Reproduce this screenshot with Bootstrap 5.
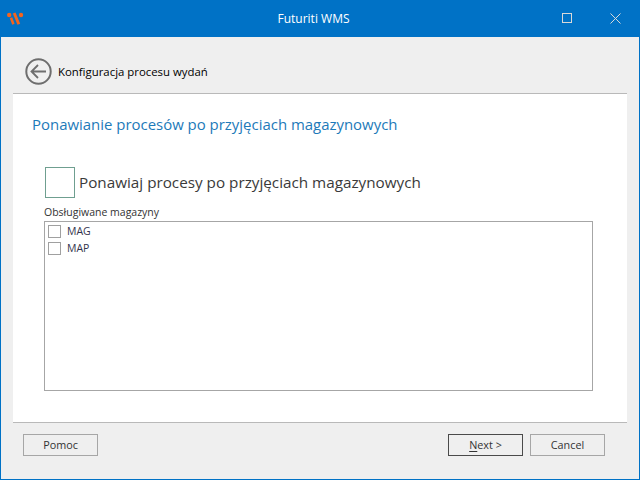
<!DOCTYPE html>
<html lang="pl">
<head>
<meta charset="utf-8">
<title>Futuriti WMS</title>
<link href="https://cdn.jsdelivr.net/npm/bootstrap@5.3.0/dist/css/bootstrap.min.css" rel="stylesheet">
<style>
html,body{height:100%;margin:0;overflow:hidden}
body{font-family:"Open Sans","Noto Sans",sans-serif;font-size:11.5px;color:#333;background:#efefef}
.win{width:640px;height:480px;border:solid #0072c6;border-width:0 1px 1px 1px;background:#efefef}
.tbar{height:37px;background:#0072c6;color:#fff;position:relative;margin:0 -1px;padding-left:6px;padding-right:19px}
.tbar-title{position:absolute;left:0;right:13px;top:0;line-height:37px;text-align:center;font-size:12px}
.wizhead{height:56px;padding-left:24px;padding-top:21px;color:#000}
.wizhead svg{display:block}
.wiztitle{margin-left:6px;font-size:11.4px;line-height:27px}
.pane{height:330px;margin:0 12px;background:#fff;border-top:1px solid #b9b9b9;border-bottom:1px solid #b9b9b9;padding:0 0 0 19px}
.pane-h{font-size:14.95px;color:#1d7ab9;margin:0;line-height:20px;padding-top:20px;font-weight:400}
.bigrow{margin-top:33px;margin-left:13px;height:31px}
.bigcheck.form-check-input{width:30px;height:31px;margin:0;border:1px solid #6f9f90;border-radius:0;background-color:#fff;flex:none}
.bigtext{margin-left:4px;font-size:15.25px;color:#3a3a3a}
.grp{margin-left:12px;font-size:10.5px;line-height:14px;margin-top:7px;margin-bottom:2px;color:#333}
.box{width:549px;height:170px;margin-left:12px;border:1px solid #a6a6a6;padding:1px 3px}
.itm{height:17px;color:#33334d;font-size:10.5px}
.itm .form-check-input{width:13px;height:13px;margin:0 6px 0 0;border:1px solid #a0a0a0;border-radius:0;flex:none}
.foot{padding:11px 34px 0 22px}
.wbtn.btn{width:75px;height:22px;padding:0;border:1px solid #a6a6a6;border-radius:0;background:#efefef;font-size:10.8px;line-height:20px;color:#333}
.wbtn.prim{border-color:#4a4a4a}
.wbtn.alt{margin-left:7px}
.wbtn u{text-underline-offset:2px}
</style>
</head>
<body>
<div class="win d-flex flex-column">
  <div class="tbar d-flex align-items-center justify-content-between">
    <div class="tbar-title">Futuriti WMS</div>
    <svg width="20" height="20" viewBox="0 0 20 20"><g fill="#f4641d"><circle cx="3.200" cy="6" r="2.200"/><path d="M3.800 9.300l2.400-1 2.400 6.500-2.400.9z"/><path d="M6.800 4.500l2.700-1 4.700 11.300-2.700 1z"/><circle cx="15" cy="6" r="2.200"/></g></svg>
    <div class="d-flex align-items-center" style="gap:37px">
      <svg width="11" height="11" viewBox="0 0 11 11"><rect x=".5" y=".5" width="9" height="9" fill="none" stroke="#d8d8d8"/></svg>
      <svg width="11" height="11" viewBox="0 0 11 11"><path d="M.5.500l10 10M10.500.500l-10 10" stroke="#d8d8d8" fill="none"/></svg>
    </div>
  </div>
  <div class="wizhead d-flex align-items-start">
    <svg width="27" height="27" viewBox="0 0 27 27"><circle cx="13.500" cy="13.500" r="12.200" fill="none" stroke="#6e6e6e" stroke-width="2"/><path d="M21 13.500H7M13 7l-6.500 6.500L13 20" fill="none" stroke="#6e6e6e" stroke-width="1.800"/></svg>
    <span class="wiztitle">Konfiguracja procesu wydań</span>
  </div>
  <div class="pane">
    <h1 class="pane-h">Ponawianie procesów po przyjęciach magazynowych</h1>
    <div class="bigrow d-flex align-items-center">
      <input class="form-check-input bigcheck" type="checkbox" id="c0">
      <label class="bigtext" for="c0">Ponawiaj procesy po przyjęciach magazynowych</label>
    </div>
    <div class="grp">Obsługiwane magazyny</div>
    <div class="box">
      <div class="itm d-flex align-items-center"><input class="form-check-input" type="checkbox" id="c1"><label for="c1">MAG</label></div>
      <div class="itm d-flex align-items-center"><input class="form-check-input" type="checkbox" id="c2"><label for="c2">MAP</label></div>
    </div>
  </div>
  <div class="foot d-flex">
    <button class="btn wbtn">Pomoc</button>
    <button class="btn wbtn prim ms-auto"><u>N</u>ext &gt;</button>
    <button class="btn wbtn alt">Cancel</button>
  </div>
</div>
<script src="https://cdn.jsdelivr.net/npm/bootstrap@5.3.0/dist/js/bootstrap.bundle.min.js"></script>
</body>
</html>
